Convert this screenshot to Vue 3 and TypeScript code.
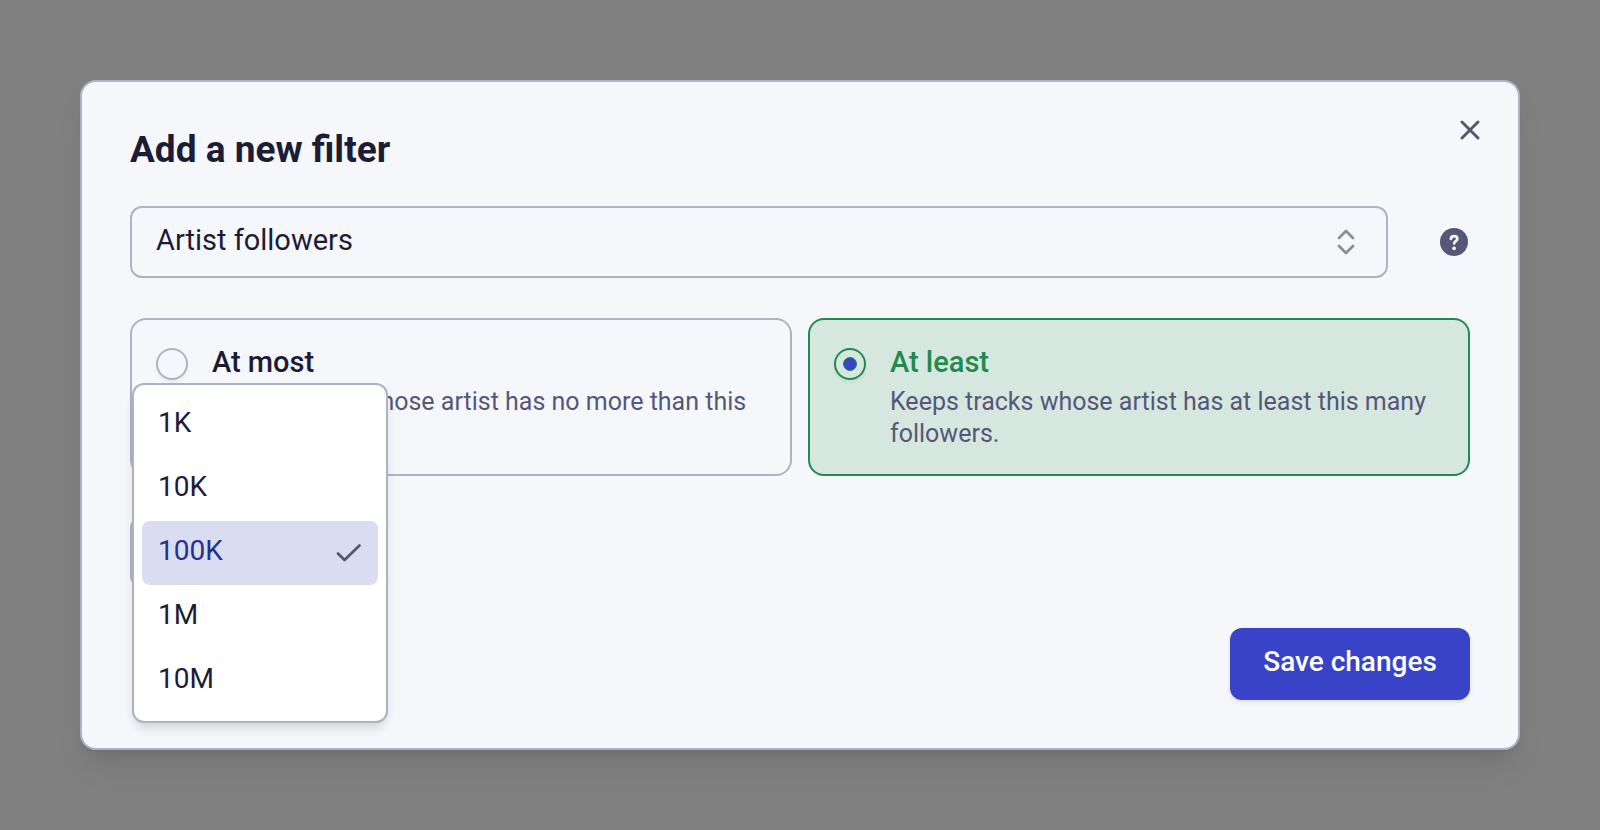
<script setup lang="ts">
import { ref } from 'vue'

interface Mode {
  value: string
  label: string
  description: string
}

const filters: string[] = ['Artist followers']
const modes: Mode[] = [
  {
    value: 'most',
    label: 'At most',
    description: 'Keeps tracks whose artist has no more than this many followers.',
  },
  {
    value: 'least',
    label: 'At least',
    description: 'Keeps tracks whose artist has at least this many followers.',
  },
]
const amounts: string[] = ['1K', '10K', '100K', '1M', '10M']

const filter = ref(filters[0])
const mode = ref('least')
const amount = ref('100K')
const menuOpen = ref(true)

function choose(value: string): void {
  amount.value = value
  menuOpen.value = false
}
</script>

<template>
  <div class="backdrop">
    <form class="dialog" role="dialog" aria-labelledby="dialog-title" @submit.prevent>
      <h1 id="dialog-title" class="title">Add a new filter</h1>
      <button class="close" type="button" aria-label="Close">
        <svg viewBox="0 0 20 20" width="20" height="20" aria-hidden="true">
          <path d="M2 2l16 16M18 2L2 18" fill="none" stroke="currentColor" stroke-width="2.9" stroke-linecap="round" />
        </svg>
      </button>

      <div class="filter-row">
        <div class="select-wrap">
          <select v-model="filter" class="field" aria-label="Filter">
            <option v-for="name in filters" :key="name">{{ name }}</option>
          </select>
          <svg class="chevrons" viewBox="0 0 20 28" width="20" height="28" aria-hidden="true">
            <path d="M3 10l7-7 7 7M3 18l7 7 7-7" fill="none" stroke="currentColor" stroke-width="2.8" stroke-linecap="round" stroke-linejoin="round" />
          </svg>
        </div>
        <button class="help" type="button" aria-label="Help">
          <svg viewBox="0 0 28 28" width="28" height="28" aria-hidden="true">
            <circle cx="14" cy="14" r="14" fill="currentColor" />
            <path d="M10.9 11c0-1.800 1.400-2.900 3.200-2.900s3.200 1.100 3.200 2.800c0 2.200-3.200 2.200-3.200 4.600" fill="none" stroke="#f5f7fb" stroke-width="2.700" stroke-linecap="round" stroke-linejoin="round" />
            <circle cx="14.100" cy="20.300" r="1.900" fill="#f5f7fb" />
          </svg>
        </button>
      </div>

      <div class="modes" role="radiogroup" aria-label="Comparison">
        <label v-for="item in modes" :key="item.value" class="card" :class="{ selected: mode === item.value }">
          <input v-model="mode" class="radio" type="radio" name="mode" :value="item.value" />
          <span class="card-text">
            <span class="card-title">{{ item.label }}</span>
            <span class="card-description">{{ item.description }}</span>
          </span>
        </label>
      </div>

      <div class="amount">
        <button
          class="field"
          type="button"
          aria-haspopup="listbox"
          aria-label="Followers"
          :aria-expanded="menuOpen"
          @click="menuOpen = !menuOpen"
        >
          {{ amount }}
        </button>
        <div v-if="menuOpen" class="menu" role="listbox" aria-label="Followers">
          <button
            v-for="value in amounts"
            :key="value"
            class="option"
            :class="{ current: value === amount }"
            type="button"
            role="option"
            :aria-selected="value === amount"
            @click="choose(value)"
          >
            {{ value }}
            <svg v-if="value === amount" class="check" viewBox="0 0 26 20" width="26" height="20" aria-hidden="true">
              <path d="M2 10.500l6.500 6.500L23.500 2.500" fill="none" stroke="currentColor" stroke-width="2.700" stroke-linecap="round" stroke-linejoin="round" />
            </svg>
          </button>
        </div>
      </div>

      <button class="save" type="submit">Save changes</button>
    </form>
  </div>
</template>

<style>
body {
  margin: 0;
  background: #808080;
}
</style>

<style scoped>
.backdrop {
  box-sizing: border-box;
  min-height: 100vh;
  padding: 40px 80px;
  display: flex;
  align-items: center;
  font-family: Roboto, "Noto Sans", sans-serif;
  font-size: 29px;
  line-height: 40px;
  color: #1c1c35;
  background: #808080;
}

.backdrop *,
.backdrop *::before {
  box-sizing: border-box;
}

button,
select {
  margin: 0;
  font: inherit;
  color: inherit;
  cursor: pointer;
}

.dialog {
  position: relative;
  flex: 1;
  display: flex;
  flex-direction: column;
  gap: 40px;
  padding: 48px;
  border: 2px solid #aeb2c9;
  border-radius: 16px;
  background: #f5f7fb;
  box-shadow: 0 20px 30px -6px rgba(0, 0, 0, 0.1), 0 8px 12px -8px rgba(0, 0, 0, 0.1);
}

.title {
  margin: 0 0 -4px;
  font-size: 37px;
  line-height: 40px;
  font-weight: 700;
}

.close {
  position: absolute;
  top: 32px;
  right: 32px;
  display: flex;
  padding: 6px;
  border: 0;
  background: none;
  color: #55576f;
}

.filter-row {
  display: flex;
  align-items: center;
  gap: 52px;
}

.select-wrap {
  position: relative;
  flex: 1;
}

.field {
  display: block;
  width: 100%;
  height: 72px;
  padding: 0 24px 4px;
  border: 2px solid #aeb2c9;
  border-radius: 12px;
  background: #f5f7fb;
  text-align: left;
  appearance: none;
}

.chevrons {
  position: absolute;
  top: 22px;
  right: 32px;
  color: #8d8e94;
  pointer-events: none;
}

.help {
  display: flex;
  margin-right: 2px;
  padding: 0;
  border: 0;
  background: none;
  color: #555778;
}

.modes {
  display: grid;
  grid-template-columns: 1fr 1fr;
  gap: 16px;
}

.card {
  display: flex;
  gap: 24px;
  padding: 22px 24px 24px;
  border: 2px solid #aeb2c9;
  border-radius: 16px;
  cursor: pointer;
}

.card.selected {
  border-color: #208b4c;
  background: #d6e7e0;
}

.radio {
  flex: none;
  display: grid;
  place-content: center;
  width: 32px;
  height: 32px;
  margin: 6px 0 0;
  border: 2px solid #aeb2c9;
  border-radius: 50%;
  box-shadow: 0 2px 4px rgba(0, 0, 0, 0.06);
  appearance: none;
}

.selected .radio {
  border-color: #208b4c;
}

.radio:checked::before {
  content: "";
  width: 14px;
  height: 14px;
  border: 1px solid #208b4c;
  border-radius: 50%;
  background: #3843c7;
}

.card-text {
  display: flex;
  flex-direction: column;
  gap: 4px;
}

.card-title {
  font-weight: 500;
}

.selected .card-title {
  color: #208b4c;
}

.card-description {
  font-size: 25px;
  line-height: 32px;
  color: #555778;
}

.amount {
  position: relative;
  width: 256px;
}

.menu {
  position: absolute;
  bottom: -135px;
  left: 2px;
  width: 256px;
  padding: 8px;
  border: 2px solid #aeb2c9;
  border-radius: 12px;
  background: #fff;
  box-shadow: 0 8px 12px -2px rgba(0, 0, 0, 0.1), 0 4px 8px -4px rgba(0, 0, 0, 0.1);
}

.option {
  display: flex;
  align-items: center;
  justify-content: space-between;
  width: 100%;
  height: 64px;
  padding: 0 16px 4px;
  border: 0;
  border-radius: 8px;
  background: none;
  font-size: 28px;
}

.option.current {
  background: #dadcf1;
  color: #272f8f;
}

.check {
  margin-top: 4px;
  color: #55576f;
}

.save {
  align-self: flex-end;
  min-width: 240px;
  height: 72px;
  padding: 0 32px 4px;
  border: 0;
  border-radius: 12px;
  background: #3843c7;
  box-shadow: 0 2px 4px rgba(0, 0, 0, 0.1);
  color: #fff;
  font-size: 28px;
  font-weight: 500;
}
</style>
